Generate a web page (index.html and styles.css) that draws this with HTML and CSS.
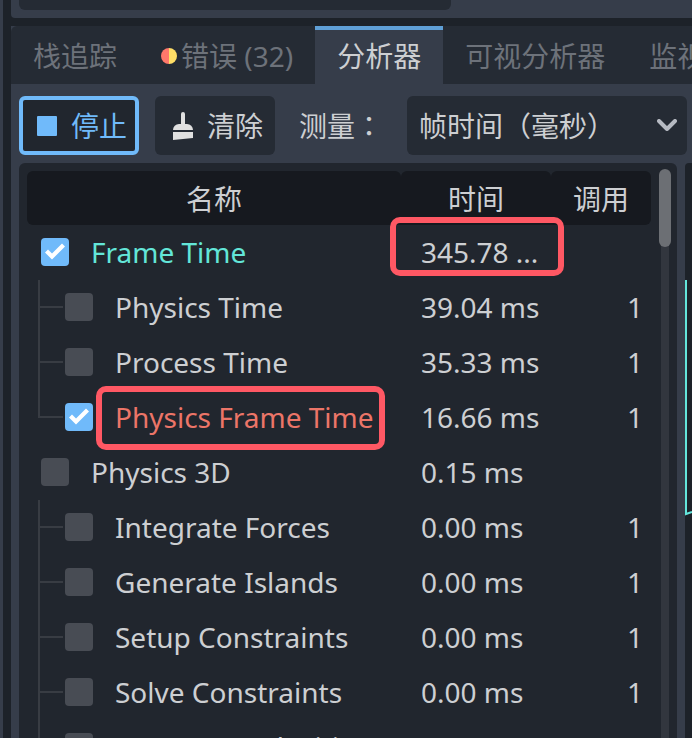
FILE: index.html
```html
<!DOCTYPE html>
<html lang="zh-CN">
<head>
    <meta charset="UTF-8">
    <meta name="viewport" content="width=device-width, initial-scale=1.0">
    <title>分析器</title>
    <link rel="stylesheet" href="styles.css">
</head>
<body>

    <div class="side-strip"></div>

    <div class="dock">
        <div class="upper-panel">
            <div class="upper-field"></div>
        </div>

        <div class="debugger">
            <nav class="tabs">
                <button type="button" class="tab">栈追踪</button>
                <button type="button" class="tab">
                    <svg class="dot" viewBox="0 0 16 16" aria-hidden="true">
                        <path d="M8 0a8 8 0 0 0 0 16z" fill="#ff786b"/>
                        <path d="M8 0a8 8 0 0 1 0 16z" fill="#ffde66"/>
                    </svg>
                    错误 (32)
                </button>
                <button type="button" class="tab active">分析器</button>
                <button type="button" class="tab">可视分析器</button>
                <button type="button" class="tab">监视</button>
            </nav>

            <div class="toolbar">
                <button type="button" class="btn btn-stop">
                    <svg class="icon-stop" viewBox="0 0 20 20" aria-hidden="true">
                        <rect width="20" height="20" rx="1" fill="#70bafa"/>
                    </svg>
                    停止
                </button>
                <button type="button" class="btn btn-clear">
                    <svg class="icon-clear" viewBox="0 0 20 28" aria-hidden="true">
                        <path d="M8 2a2 2 0 0 1 4 0v10h2a6 6 0 0 1 6 6H0a6 6 0 0 1 6-6h2z" fill="#e0e0e0"/>
                        <path d="M0 20h20v6L0 28z" fill="#e0e0e0"/>
                    </svg>
                    清除
                </button>
                <label class="measure-label" for="measure" lang="zh-TW">测量：</label>
                <div class="select-wrap">
                    <select id="measure">
                        <option>帧时间（毫秒）</option>
                        <option>平均时间（毫秒）</option>
                    </select>
                    <svg class="chevron" viewBox="0 0 20 12" aria-hidden="true">
                        <path d="M2 2l8 8 8-8" fill="none" stroke="#b6bac2" stroke-width="4" stroke-linecap="round" stroke-linejoin="round"/>
                    </svg>
                </div>
            </div>

            <div class="content">
                <div class="tree">
                    <table>
                        <colgroup>
                            <col>
                            <col class="col-time">
                            <col class="col-calls">
                        </colgroup>
                        <thead>
                            <tr><th>名称</th><th>时间</th><th>调用</th></tr>
                        </thead>
                        <tbody>
                            <tr>
                                <td><label class="item cyan"><input type="checkbox" checked><span>Frame Time</span></label></td>
                                <td class="time marked-time">345.78 ...</td>
                                <td class="calls"></td>
                            </tr>
                            <tr class="child">
                                <td><label class="item"><input type="checkbox"><span>Physics Time</span></label></td>
                                <td class="time">39.04 ms</td>
                                <td class="calls">1</td>
                            </tr>
                            <tr class="child">
                                <td><label class="item"><input type="checkbox"><span>Process Time</span></label></td>
                                <td class="time">35.33 ms</td>
                                <td class="calls">1</td>
                            </tr>
                            <tr class="child last">
                                <td><label class="item red"><input type="checkbox" checked><span class="marked-name">Physics Frame Time</span></label></td>
                                <td class="time">16.66 ms</td>
                                <td class="calls">1</td>
                            </tr>
                            <tr>
                                <td><label class="item"><input type="checkbox"><span>Physics 3D</span></label></td>
                                <td class="time">0.15 ms</td>
                                <td class="calls"></td>
                            </tr>
                            <tr class="child">
                                <td><label class="item"><input type="checkbox"><span>Integrate Forces</span></label></td>
                                <td class="time">0.00 ms</td>
                                <td class="calls">1</td>
                            </tr>
                            <tr class="child">
                                <td><label class="item"><input type="checkbox"><span>Generate Islands</span></label></td>
                                <td class="time">0.00 ms</td>
                                <td class="calls">1</td>
                            </tr>
                            <tr class="child">
                                <td><label class="item"><input type="checkbox"><span>Setup Constraints</span></label></td>
                                <td class="time">0.00 ms</td>
                                <td class="calls">1</td>
                            </tr>
                            <tr class="child">
                                <td><label class="item"><input type="checkbox"><span>Solve Constraints</span></label></td>
                                <td class="time">0.00 ms</td>
                                <td class="calls">1</td>
                            </tr>
                            <tr class="child last">
                                <td><label class="item"><input type="checkbox"><span>Integrate Velocities</span></label></td>
                                <td class="time">0.00 ms</td>
                                <td class="calls">1</td>
                            </tr>
                        </tbody>
                    </table>
                    <div class="scrollbar"><div class="thumb"></div></div>
                </div>

                <div class="graph">
                    <svg viewBox="0 0 7 360" aria-hidden="true">
                        <path d="M0 118h1v233l6-2" fill="none" stroke="#63e6dc" stroke-width="2"/>
                    </svg>
                </div>
            </div>
        </div>
    </div>

</body>
</html>
```
FILE: styles.css
```css
* {
    box-sizing: border-box;
}
body {
    margin: 0;
    height: 100vh;
    display: flex;
    gap: 8px;
    overflow: hidden;
    background-color: #1d2229;
    color: #cdcfd2;
    font-family: "Noto Sans", "Noto Sans CJK SC", sans-serif;
    font-size: 28px;
    line-height: 40px;
}
button, select {
    font: inherit;
    color: inherit;
    border: none;
    margin: 0;
}
.side-strip {
    width: 3px;
    background-color: #363d4a;
}
.dock {
    flex: 1;
    min-width: 0;
    display: flex;
    flex-direction: column;
    gap: 8px;
}
.upper-panel {
    height: 18px;
    flex: none;
    padding: 0 8px 8px;
    background-color: #363d4a;
    border-radius: 0 0 0 4px;
}
.upper-field {
    width: 65%;
    height: 10px;
    background-color: #252b34;
    border-radius: 0 0 6px 6px;
}
.debugger {
    flex: 1;
    min-height: 0;
    display: flex;
    flex-direction: column;
    background-color: #363d4a;
}

/* Pestañas */
.tabs {
    display: flex;
    flex: none;
    height: 58px;
    overflow: hidden;
    background-color: #252b34;
    border-radius: 6px 0 0 0;
}
.tab {
    display: flex;
    flex: none;
    align-items: center;
    gap: 4px;
    padding: 2px 22px 0;
    background: none;
    color: #6d727a;
    white-space: nowrap;
    cursor: pointer;
}
.tab.active {
    padding: 0 22px 2px;
    background-color: #363d4a;
    border-top: 4px solid #5f9fd6;
    color: #cdcfd2;
}
.dot {
    width: 16px;
    height: 16px;
}

/* Barra de herramientas */
.toolbar {
    display: flex;
    flex: none;
    gap: 16px;
    padding: 12px 5px 8px 8px;
}
.btn {
    display: flex;
    flex: none;
    align-items: center;
    gap: 14px;
    width: 120px;
    height: 59px;
    padding: 0 0 0 18px;
    background-color: #252b34;
    border-radius: 6px;
    white-space: nowrap;
    cursor: pointer;
}
.btn-stop {
    padding-left: 14px;
    background-color: #21262e;
    border: 4px solid #70bafa;
    color: #70bafa;
}
.icon-stop {
    width: 20px;
    height: 20px;
}
.icon-clear {
    width: 20px;
    height: 28px;
}
.measure-label {
    flex: none;
    padding: 0 8px;
    line-height: 59px;
    font-family: "Noto Sans CJK TC", sans-serif;
}
.select-wrap {
    position: relative;
    flex: 1;
    min-width: 0;
}
.select-wrap select {
    appearance: none;
    width: 100%;
    height: 59px;
    padding: 0 40px 0 12px;
    background-color: #252b34;
    border-radius: 6px;
}
.chevron {
    position: absolute;
    top: 23px;
    right: 10px;
    width: 20px;
    height: 12px;
    pointer-events: none;
}

/* Árbol de mediciones */
.content {
    flex: 1;
    min-height: 0;
    display: flex;
    gap: 8px;
}
.tree {
    flex: 1;
    min-width: 0;
    display: flex;
    gap: 8px;
    margin-left: 8px;
    padding: 8px 6px 0 8px;
    overflow: hidden;
    background-color: #21262e;
    border-radius: 6px 6px 0 0;
}
table {
    flex: 1;
    align-self: flex-start;
    table-layout: fixed;
    width: 0;
    border-collapse: separate;
    border-spacing: 0;
}
.col-time {
    width: 150px;
}
.col-calls {
    width: 100px;
}
th {
    height: 54px;
    padding: 2px 0 0;
    background-color: #16191f;
    border-radius: 6px 6px 0 0;
    font-weight: normal;
}
th:first-child {
    border-bottom-left-radius: 6px;
}
th:last-child {
    border-bottom-right-radius: 6px;
}
td {
    position: relative;
    height: 55px;
    padding: 0 0 2px;
    white-space: nowrap;
}
.item {
    display: flex;
    align-items: center;
    gap: 22px;
    padding-left: 14px;
}
.child .item {
    padding-left: 38px;
}
.item input {
    appearance: none;
    flex: none;
    width: 28px;
    height: 28px;
    margin: 0;
    background-color: #484c54;
    border-radius: 4px;
}
.item input:checked {
    display: grid;
    place-items: center;
    background-color: #70bafa;
}
.item input:checked::before {
    content: "";
    width: 20px;
    height: 18px;
    background-color: #fff;
    clip-path: polygon(0 10px, 3px 7px, 7px 11px, 17px 1px, 20px 4px, 7px 17px);
}
.cyan {
    color: #63e6d9;
}
.red {
    color: #ec7568;
}
.time {
    padding-left: 20px;
}
.calls {
    padding-right: 8px;
    text-align: right;
}

/* Líneas de relación */
.child td:first-child::before {
    content: "";
    position: absolute;
    top: 0;
    left: 11px;
    width: 2px;
    height: 100%;
    background-color: #383c43;
}
.child.last td:first-child::before {
    height: 50%;
}
.child td:first-child::after {
    content: "";
    position: absolute;
    top: 50%;
    left: 11px;
    width: 25px;
    height: 2px;
    margin-top: -2px;
    background-color: #383c43;
}

/* Marcos rojos */
.marked-name {
    position: relative;
}
.marked-time::after,
.marked-name::after {
    content: "";
    position: absolute;
    border: 6px solid #ff5864;
    border-radius: 10px;
}
.marked-time::after {
    inset: -8px -13px 4px -11px;
}
.marked-name::after {
    inset: -11px -11px -13px -19px;
}

.scrollbar {
    width: 12px;
    padding: 0 2px;
    background: linear-gradient(#32363e, #32363e) center / 8px 100% no-repeat;
}
.thumb {
    width: 12px;
    height: 78px;
    margin: -2px -2px 0;
    background-color: #6c6f74;
    border-radius: 6px;
}
.graph {
    flex: none;
    width: 7px;
    background-color: #1d2229;
    border-radius: 4px 0 0 0;
}
.graph svg {
    display: block;
    width: 7px;
    height: 360px;
}
```
